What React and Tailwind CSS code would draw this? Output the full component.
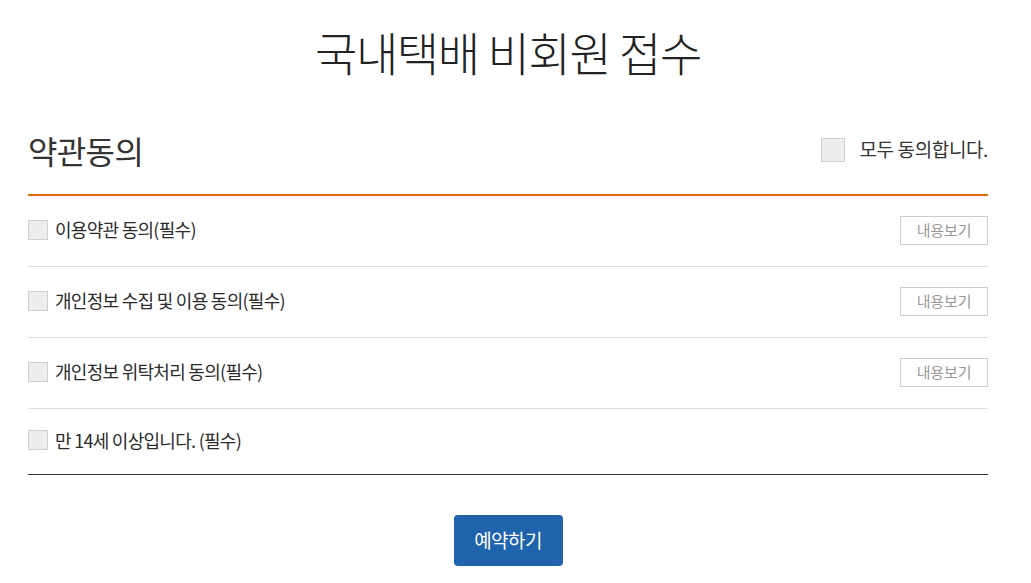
import React from 'react';

const terms = [
  { id: 'use', label: '이용약관 동의(필수)', view: true },
  { id: 'privacy', label: '개인정보 수집 및 이용 동의(필수)', view: true },
  { id: 'consign', label: '개인정보 위탁처리 동의(필수)', view: true },
  { id: 'age', label: '만 14세 이상입니다. (필수)', view: false },
];

function Box({ size = 'w-5 h-5' }) {
  return <span className={`${size} shrink-0 border border-[#cfcfcf] bg-[#ededed] inline-block`} />;
}

export default function App() {
  return (
    <div className="min-h-screen bg-white text-[#333] font-['Noto_Sans_CJK_KR','Noto_Sans',sans-serif]">
      <div className="w-[1016px]">
        <div className="w-[960px] mx-auto">
          <h1 className="pt-[22px] h-[107px] text-center text-[46px] font-light tracking-[-0.03em] leading-[58px] text-[#222]">
            국내택배 비회원 접수
          </h1>

          {/* 약관동의 헤더 */}
          <div className="flex items-center justify-between h-[89px] border-b-2 border-[#e06a00]">
            <h2 className="text-[32px] font-normal tracking-[-0.02em] text-[#333] -mt-[2px]">약관동의</h2>
            <label className="flex items-center gap-[15px] -mt-[2px]">
              <Box size="w-[24px] h-[24px]" />
              <span className="text-[19px] tracking-[-0.02em] text-[#333]">모두 동의합니다.</span>
            </label>
          </div>

          <ul className="border-b border-[#333]">
            {terms.map((t, i) => (
              <li
                key={t.id}
                className={`flex items-center justify-between ${i < terms.length - 1 ? 'h-[71px] border-b border-[#ddd]' : 'h-[65px]'}`}
              >
                <label className="flex items-center gap-[7px] -mt-[3px]">
                  <Box />
                  <span className="text-[18px] tracking-[-0.04em] text-[#2b2b2b]">{t.label}</span>
                </label>
                {t.view && (
                  <button className="w-[88px] h-[29px] border border-[#ccc] bg-white text-[15px] tracking-[-0.01em] text-[#999] -mt-[2px]">
                    내용보기
                  </button>
                )}
              </li>
            ))}
          </ul>

          <div className="flex justify-center pt-[40px]">
            <button className="w-[109px] h-[51px] rounded-[4px] bg-[#1f63ad] text-white text-[19px] tracking-[-0.03em]">
              예약하기
            </button>
          </div>
        </div>
      </div>
    </div>
  );
}
